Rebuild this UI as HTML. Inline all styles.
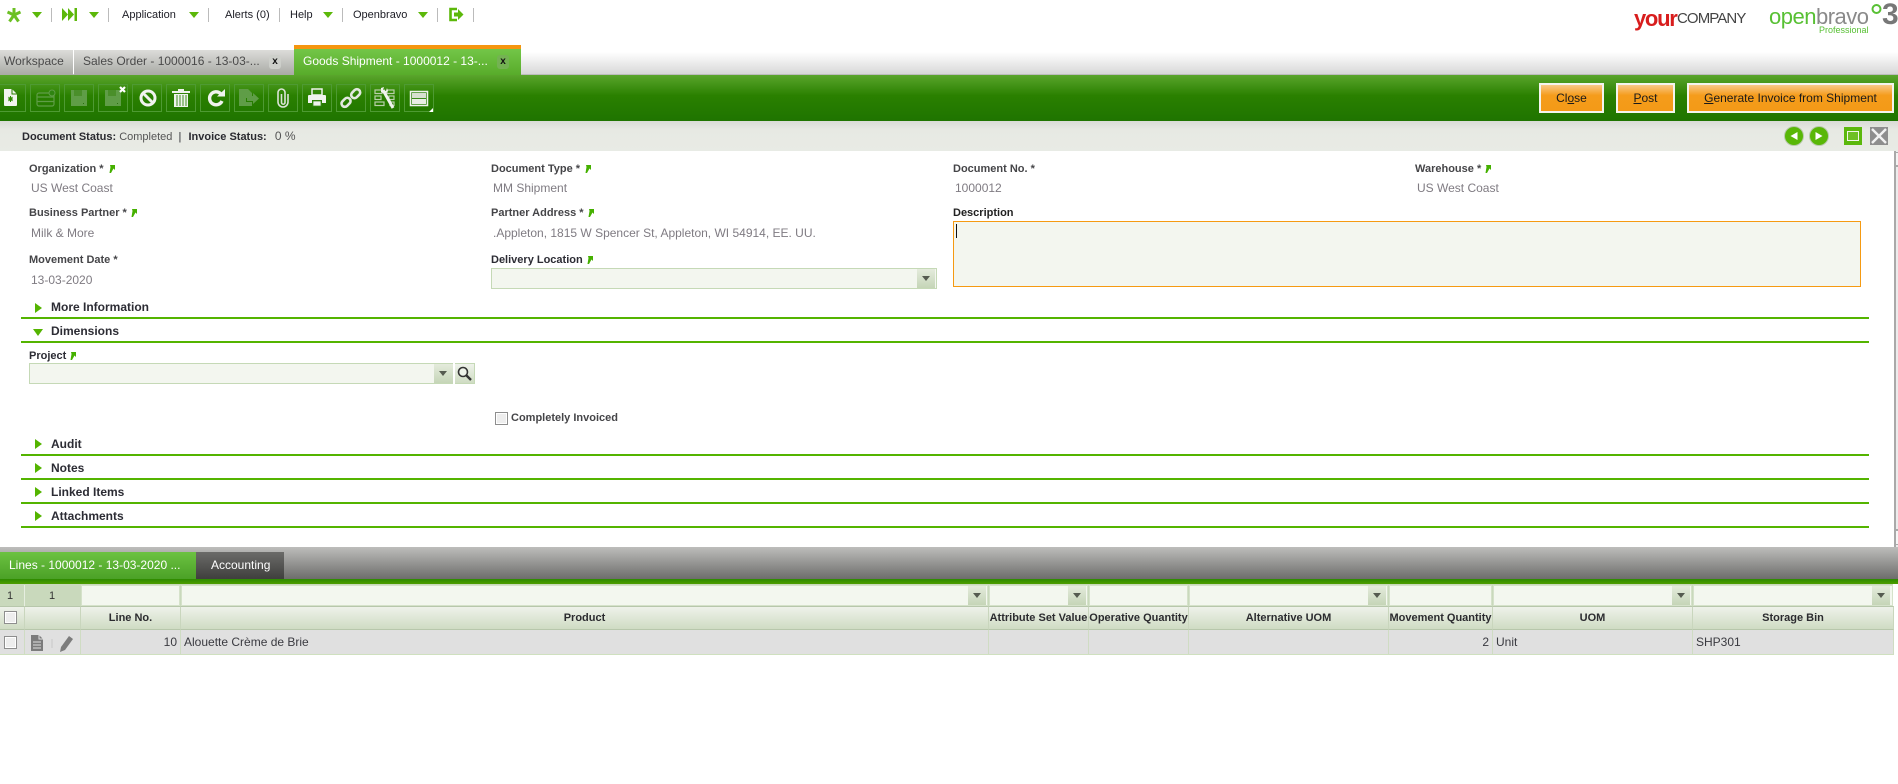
<!DOCTYPE html>
<html><head><meta charset="utf-8"><title>Goods Shipment</title>
<style>
html,body{margin:0;padding:0;background:#fff;width:1898px;height:784px;overflow:hidden;font-family:"Liberation Sans",sans-serif}
div,span,svg{position:absolute;box-sizing:border-box;white-space:nowrap}
.m{font-size:11px;color:#1c1c24;top:9px;line-height:13px}
.sep{width:1px;height:14px;top:8px;background:#bbb}
.dd{width:0;height:0;border-left:5px solid transparent;border-right:5px solid transparent;border-top:6px solid #5cb80a;top:12px}
.tab{top:50px;height:25px;line-height:23px;font-size:12px;background:linear-gradient(#dcdcd9,#a9aaa5);color:#4a4a4a;padding-left:4px}
.x{width:12px;height:14px;top:55px;background:#8fb07f;border-radius:3px;color:#111;font-size:10px;line-height:13px;text-align:center;font-weight:bold}
.b{top:84px;width:30px;height:28px;border:1px solid #4e9a33}
.tb{top:83px;height:30px;border:2px solid #f4f4ee;background:linear-gradient(#f9c987 0,#f59c1b 40%,#f49a17 100%);color:#1a1a1a;font-size:12px;line-height:26px;text-align:center}
.tb u{text-decoration:underline}
.l{font-size:11px;font-weight:bold;color:#454548;line-height:13px}
.v{font-size:12px;color:#7f7b82;line-height:14px}
.s{font-size:12px;font-weight:bold;color:#2c2c34;left:51px;line-height:14px}
.ln{left:21px;width:1848px;height:2px;background:#54b400}
.cmb{background:#f3f6ef;border:1px solid #c5d9b6}
.arr{width:8px;height:9px}
.r{width:0;height:0;border-top:5.5px solid transparent;border-bottom:5.5px solid transparent;border-left:7px solid #54b400;left:35px}
.fc{top:585px;height:21px;background:#f3f7ef;border:1px solid #d5e2ca}
.h{top:606px;height:24px;background:linear-gradient(#eef2ea,#cfdcc3);border-top:1px solid #b7c7ab;border-bottom:1px solid #b7c7ab;border-right:1px solid #c9d6bd;font-size:11px;font-weight:bold;color:#2b2b2f;text-align:center;line-height:23px;overflow:hidden}
.d{top:630px;height:25px;background:#e0e0e0;border-bottom:1px solid #cfe0bf;border-right:1px solid #cfdcc3;font-size:12px;color:#3a3a40;line-height:24px;padding:0 3px;overflow:hidden}
.fb{top:586px;width:18px;height:19px;background:linear-gradient(#e4ebdc,#c5d5b7)}
.fb:after{content:"";position:absolute;left:5px;top:7px;border-left:4.5px solid transparent;border-right:4.5px solid transparent;border-top:5px solid #555b50}
.ck{width:13px;height:13px;border:1px solid #8e8e8e;background:#eee;box-shadow:inset 0 0 0 1px #fff}
</style></head><body>

<!-- top menu -->
<svg style="left:6px;top:7px" width="16" height="16" viewBox="0 0 16 16"><g stroke="#6cc024" stroke-width="3" fill="none"><path d="M8 1v7M8 8L1.500 5M8 8l6.500-3M8 8l-4.500 6.500M8 8l4.500 6.500"/></g></svg>
<div class="dd" style="left:32px"></div><div class="sep" style="left:51px"></div>
<svg style="left:62px;top:7px" width="16" height="15" viewBox="0 0 16 15"><path d="M0 1l6 6.500L0 14zM6 1l6 6.500L6 14z" fill="#5cb80a"/><rect x="12.500" y="1" width="2.500" height="13" fill="#5cb80a"/></svg>
<div class="dd" style="left:89px"></div><div class="sep" style="left:108px"></div>
<div class="m" style="left:122px">Application</div><div class="dd" style="left:189px"></div><div class="sep" style="left:208px"></div>
<div class="m" style="left:225px">Alerts (0)</div><div class="sep" style="left:279px"></div>
<div class="m" style="left:290px">Help</div><div class="dd" style="left:323px"></div><div class="sep" style="left:342px"></div>
<div class="m" style="left:353px">Openbravo</div><div class="dd" style="left:418px"></div><div class="sep" style="left:437px"></div>
<svg style="left:449px;top:7px" width="15" height="15" viewBox="0 0 15 15"><path d="M8 2H1.500v11H8" fill="none" stroke="#5cb80a" stroke-width="2.600"/><path d="M5 5.500h4V2l5.500 5.500L9 13V9.500H5z" fill="#5cb80a"/></svg>
<div class="sep" style="left:473px"></div>

<!-- logos -->
<div style="left:1634px;top:7px;font-size:22px;line-height:24px;font-weight:bold;color:#d81d1d;letter-spacing:-1.300px">your</div>
<div style="left:1677px;top:10px;font-size:15px;line-height:17px;color:#444;letter-spacing:-.9px">COMPANY</div>
<div style="left:1769px;top:5px;font-size:22px;line-height:24px;color:#58c034;letter-spacing:-.5px">open<span style="position:static;color:#8a8a8a">bravo</span></div>
<div style="left:1819px;top:25px;font-size:9px;line-height:11px;color:#58c034">Professional</div>
<svg style="left:1871px;top:3px" width="11" height="12" viewBox="0 0 11 12"><circle cx="5.500" cy="6" r="4" fill="none" stroke="#58c034" stroke-width="2"/></svg>
<div style="left:1882px;top:0;font-size:30px;line-height:30px;font-weight:bold;color:#777">3</div>

<!-- hatched band -->
<div style="left:521px;top:52px;width:1377px;height:23px;background:linear-gradient(#fff,#d6d6d6)"></div>
<div style="left:0;top:74px;width:1898px;height:1px;background:#bcbcbc"></div>

<!-- tabs -->
<div class="tab" style="left:0;width:73px">Workspace</div>
<div class="tab" style="left:74px;width:220px;padding-left:9px">Sales Order - 1000016 - 13-03-...</div>
<div class="x" style="left:269px;background:#cdcfca">x</div>
<div class="tab" style="left:294px;top:45px;height:30px;width:227px;padding-left:9px;border-top:4px solid #f5950f;background:linear-gradient(#73c648,#58ac2a);color:#fff;line-height:25px">Goods Shipment - 1000012 - 13-...</div>
<div class="x" style="left:497px;background:#74b253">x</div>

<!-- toolbar -->
<div style="left:0;top:75px;width:1898px;height:46px;background:linear-gradient(#5aa52c,#2a8000 45%,#1f7400)"></div>
<div class="b" style="left:-4px"></div><div class="b" style="left:30px"></div><div class="b" style="left:64px"></div><div class="b" style="left:98px"></div><div class="b" style="left:132px"></div><div class="b" style="left:166px"></div><div class="b" style="left:200px"></div><div class="b" style="left:234px"></div><div class="b" style="left:268px"></div><div class="b" style="left:302px"></div><div class="b" style="left:336px"></div><div class="b" style="left:370px"></div><div class="b" style="left:404px"></div>
<svg style="left:0;top:84px" width="440" height="30" viewBox="0 0 440 30">
<!-- new -->
<path d="M4 5h8l5 5v11a1 1 0 0 1-1 1H5a1 1 0 0 1-1-1z" fill="#f2f5ef"/><path d="M12 5v5h5" fill="none" stroke="#2a8000"/><path d="M10.500 12v6M8 15h5M8.500 13l4 4M12.500 13l-4 4" stroke="#2f8a00" stroke-width="1"/>
<!-- form (disabled) -->
<g fill="none" stroke="#5f9d47" stroke-width="1.200"><rect x="37" y="9" width="17" height="13" rx="2"/><path d="M37 13h17M37 17.500h17"/></g><circle cx="52" cy="9" r="3" fill="#2f8410" stroke="#5f9d47"/>
<!-- save disabled -->
<path d="M71 6h16v16H71z" fill="#5f9d47"/><path d="M74 6h8v6h-8z" fill="#4a8f2a"/><rect x="83" y="19" width="1" height="1" fill="#2a7010"/>
<path d="M105 6h16v16h-16z" fill="#5f9d47"/><path d="M108 6h8v6h-8z" fill="#4a8f2a"/><rect x="117" y="19" width="1" height="1" fill="#2a7010"/>
<path d="M120 3l5 5M125 3l-5 5" stroke="#fff" stroke-width="2.200"/>
<!-- undo -->
<circle cx="148" cy="14" r="7" fill="none" stroke="#f0f3ee" stroke-width="3"/><path d="M143 9l10 10" stroke="#f0f3ee" stroke-width="3"/>
<!-- delete -->
<path d="M172 7h18v2h-18z" fill="#f0f3ee"/><path d="M178 5h6v2h-6z" fill="#f0f3ee"/><path d="M174 10h14v13h-14z" fill="#f0f3ee"/><path d="M177 11v11M180 11v11M183 11v11M186 11v11" stroke="#3f8c20" stroke-width="1"/>
<!-- refresh -->
<path d="M220.500 9.500a6.500 6.500 0 1 0 1.500 7.500" fill="none" stroke="#f0f3ee" stroke-width="3.400"/><path d="M217 12.500h8V5z" fill="#f0f3ee"/>
<!-- export disabled -->
<path d="M239 5h9l4 4v5h-6v4h6v4h-13z" fill="#5f9d47"/><path d="M247 12h6V9l6 5.500-6 5.500v-3h-6z" fill="#5f9d47"/>
<!-- clip -->
<path d="M281.500 10V18.500A1.750 1.750 0 0 0 285 18.500V8.500A3.500 3.500 0 0 0 278 8.500V18A5 5 0 0 0 288 18V10" fill="none" stroke="#dbe3d6" stroke-width="1.600"/>
<!-- print -->
<path d="M312 5h10v6h-10z" fill="none" stroke="#f0f3ee" stroke-width="1.500"/><path d="M309 11h16a1 1 0 0 1 1 1v7h-4v-3h-10v3h-4v-7a1 1 0 0 1 1-1z" fill="#f0f3ee"/><path d="M313 17h8v5h-8z" fill="#f0f3ee" stroke="#3f8c20" stroke-width=".8"/>
<!-- link -->
<g fill="none" stroke="#e3e9df" stroke-width="2.600"><rect x="-4.500" y="-3" width="10" height="6.500" rx="3.200" transform="translate(345.500 18.500) rotate(-45)"/><rect x="-5" y="-3" width="10" height="6.500" rx="3.200" transform="translate(355.500 9.500) rotate(-45)"/></g>
<!-- parameter -->
<g fill="none" stroke="#b8cfa9" stroke-width="1.200"><rect x="375" y="6" width="7" height="3.500"/><rect x="387" y="6" width="7" height="3.500"/><rect x="375" y="12" width="6" height="3.500"/><rect x="389" y="12" width="5" height="3.500"/><rect x="375" y="18" width="9" height="3.500"/><rect x="390" y="18" width="4" height="3.500"/></g>
<path d="M383 6l10 18" stroke="#f0f3ee" stroke-width="3"/><path d="M381 4l3-1-1 3 3 1 1-3 1 3-3 3-4-2z" fill="#f0f3ee"/>
<!-- layout -->
<rect x="410.500" y="7.500" width="17" height="14" fill="#3b8b1b" stroke="#f0f3ee" stroke-width="1.500"/><rect x="412" y="9" width="14" height="5" fill="#d6e0cf"/><rect x="412" y="15" width="14" height="5" fill="#e9eee5"/>
<path d="M433 24v4h-4z" fill="#fff"/>
</svg>

<div class="tb" style="left:1539px;width:65px">Cl<u>o</u>se</div>
<div class="tb" style="left:1616px;width:59px"><u>P</u>ost</div>
<div class="tb" style="left:1687px;width:207px"><u>G</u>enerate Invoice from Shipment</div>

<!-- status bar -->
<div style="left:0;top:121px;width:1898px;height:30px;background:linear-gradient(#d9dbd6,#e7e9e3 30%,#e8ebe5)"></div>
<div style="left:22px;top:130px;font-size:11px;line-height:13px;color:#2a2a30"><b style="position:static">Document Status:</b> <span style="position:static;color:#555">Completed</span> &nbsp;|&nbsp; <b style="position:static;margin-left:1px">Invoice Status:</b> &nbsp;<span style="position:static;color:#555;font-size:12px;margin-left:2px">0 %</span></div>
<svg style="left:1783px;top:125px" width="48" height="22" viewBox="0 0 48 22"><circle cx="11" cy="11" r="9.500" fill="#59b707" stroke="#b9c9ad"/><path d="M14.500 7v8L7.500 11z" fill="#fff"/><circle cx="36" cy="11" r="9.500" fill="#59b707" stroke="#b9c9ad"/><path d="M32.500 7v8l7-4z" fill="#fff"/></svg>
<div style="left:1844px;top:127px;width:18px;height:18px;background:#5bb80c"></div>
<div style="left:1847px;top:131px;width:12px;height:10px;border:1px solid #f1f5ea;background:#6ec025"></div>
<svg style="left:1870px;top:127px" width="18" height="18" viewBox="0 0 18 18"><rect width="18" height="18" fill="#8e8e8e"/><path d="M2 2l14 14M16 2L2 16" stroke="#f2f2f2" stroke-width="2.400"/></svg>

<!-- scrollbar -->
<div style="left:1894px;top:151px;width:4px;height:396px;background:#ececec;border-left:2px solid #a9a9a9"></div>
<div style="left:1894px;top:152px;width:4px;height:15px;background:#f3f3f3;border-left:2px solid #a9a9a9;border-top:1px solid #a9a9a9;border-bottom:2px solid #a9a9a9"></div>
<div style="left:1894px;top:529px;width:4px;height:16px;background:#f6f6f6;border-left:2px solid #a9a9a9;border-top:2px solid #a9a9a9;border-bottom:1px solid #a9a9a9"></div>

<!-- form labels -->
<div class="l" style="left:29px;top:163px">Organization *</div>
<svg class="arr" style="left:108px;top:164px" viewBox="0 0 8 9"><path d="M2 1h5v5L5.500 4.500 3 9H1.500l1-6z" fill="#45b000"/></svg>
<div class="v" style="left:31px;top:181px">US West Coast</div>
<div class="l" style="left:491px;top:163px">Document Type *</div>
<svg class="arr" style="left:584px;top:164px" viewBox="0 0 8 9"><path d="M2 1h5v5L5.500 4.500 3 9H1.500l1-6z" fill="#45b000"/></svg>
<div class="v" style="left:493px;top:181px">MM Shipment</div>
<div class="l" style="left:953px;top:163px">Document No. *</div>
<div class="v" style="left:955px;top:181px">1000012</div>
<div class="l" style="left:1415px;top:163px">Warehouse *</div>
<svg class="arr" style="left:1484px;top:164px" viewBox="0 0 8 9"><path d="M2 1h5v5L5.500 4.500 3 9H1.500l1-6z" fill="#45b000"/></svg>
<div class="v" style="left:1417px;top:181px">US West Coast</div>

<div class="l" style="left:29px;top:207px">Business Partner *</div>
<svg class="arr" style="left:130px;top:208px" viewBox="0 0 8 9"><path d="M2 1h5v5L5.500 4.500 3 9H1.500l1-6z" fill="#45b000"/></svg>
<div class="v" style="left:31px;top:226px">Milk &amp; More</div>
<div class="l" style="left:491px;top:207px">Partner Address *</div>
<svg class="arr" style="left:587px;top:208px" viewBox="0 0 8 9"><path d="M2 1h5v5L5.500 4.500 3 9H1.500l1-6z" fill="#45b000"/></svg>
<div class="v" style="left:493px;top:226px">.Appleton, 1815 W Spencer St, Appleton, WI 54914, EE. UU.</div>
<div class="l" style="left:953px;top:207px;color:#222">Description</div>
<div style="left:953px;top:221px;width:908px;height:66px;background:#f3f6ef;border:1px solid #f59a12"></div>
<div style="left:956px;top:224px;width:1px;height:14px;background:#111"></div>

<div class="l" style="left:29px;top:254px">Movement Date *</div>
<div class="v" style="left:31px;top:273px">13-03-2020</div>
<div class="l" style="left:491px;top:254px;color:#2c2c34">Delivery Location</div>
<svg class="arr" style="left:586px;top:255px" viewBox="0 0 8 9"><path d="M2 1h5v5L5.500 4.500 3 9H1.500l1-6z" fill="#45b000"/></svg>
<div class="cmb" style="left:491px;top:268px;width:446px;height:21px"></div>
<div class="fb" style="left:917px;top:269px"></div>

<!-- sections -->
<div class="r" style="top:303px"></div><div class="s" style="top:300px">More Information</div><div class="ln" style="top:317px"></div>
<div style="left:33px;top:329px;width:0;height:0;border-left:5.500px solid transparent;border-right:5.500px solid transparent;border-top:7px solid #54b400"></div><div class="s" style="top:324px">Dimensions</div><div class="ln" style="top:341px"></div>
<div class="l" style="left:29px;top:350px;color:#2c2c34">Project</div>
<svg class="arr" style="left:69px;top:351px" viewBox="0 0 8 9"><path d="M2 1h5v5L5.500 4.500 3 9H1.500l1-6z" fill="#45b000"/></svg>
<div class="cmb" style="left:29px;top:363px;width:446px;height:21px"></div>
<div class="fb" style="left:434px;top:364px;width:19px"></div>
<div style="left:453px;top:363px;width:2px;height:21px;background:#fff"></div>
<div style="left:455px;top:364px;width:19px;height:19px;background:linear-gradient(#eef2ea,#cfdcc3)"></div>
<svg style="left:457px;top:366px" width="15" height="15" viewBox="0 0 15 15"><circle cx="6" cy="6" r="4.500" fill="#eef3ea" stroke="#333" stroke-width="1.600"/><path d="M9.500 9.500l4.500 4.500" stroke="#333" stroke-width="2.400"/></svg>
<div class="ck" style="left:495px;top:412px"></div>
<div class="l" style="left:511px;top:412px">Completely Invoiced</div>

<div class="r" style="top:439px"></div><div class="s" style="top:437px">Audit</div><div class="ln" style="top:454px"></div>
<div class="r" style="top:463px"></div><div class="s" style="top:461px">Notes</div><div class="ln" style="top:478px"></div>
<div class="r" style="top:487px"></div><div class="s" style="top:485px">Linked Items</div><div class="ln" style="top:502px"></div>
<div class="r" style="top:511px"></div><div class="s" style="top:509px">Attachments</div><div class="ln" style="top:526px"></div>

<!-- lower tabs -->
<div style="left:0;top:547px;width:1898px;height:32px;background:linear-gradient(#bdbdbb,#6d6d6b)"></div>
<div style="left:0;top:552px;width:196px;height:27px;background:linear-gradient(#6cc242,#4ba127);color:#fff;font-size:12px;line-height:26px;padding-left:9px">Lines - 1000012 - 13-03-2020 ...</div>
<div style="left:196px;top:552px;width:88px;height:27px;background:linear-gradient(#6b6b69,#3f3f3d);color:#fff;font-size:12px;line-height:26px;padding-left:15px">Accounting</div>
<div style="left:0;top:579px;width:1898px;height:5px;background:linear-gradient(#2d8a00,#4d9e00)"></div>

<!-- grid filter -->
<div style="left:0;top:584px;width:80px;height:22px;background:#c9d9bc"></div>
<div style="left:24px;top:585px;width:1px;height:21px;background:#e6eee0"></div>
<div style="left:7px;top:590px;font-size:11px;line-height:13px;color:#333">1</div>
<div style="left:49px;top:590px;font-size:11px;line-height:13px;color:#333">1</div>
<div style="left:80px;top:584px;width:1813px;height:22px;background:#c9d9bc"></div>
<div class="fc" style="left:81px;width:99px"></div>
<div class="fc" style="left:181px;width:807px"></div><div class="fb" style="left:968px"></div>
<div class="fc" style="left:989px;width:99px"></div><div class="fb" style="left:1068px"></div>
<div class="fc" style="left:1089px;width:99px"></div>
<div class="fc" style="left:1189px;width:199px"></div><div class="fb" style="left:1368px"></div>
<div class="fc" style="left:1389px;width:103px"></div>
<div class="fc" style="left:1493px;width:199px"></div><div class="fb" style="left:1672px"></div>
<div class="fc" style="left:1693px;width:200px"></div><div class="fb" style="left:1872px"></div>

<!-- grid header -->
<div class="h" style="left:0;width:25px"></div><div class="ck" style="left:4px;top:611px"></div>
<div class="h" style="left:25px;width:56px"></div>
<div class="h" style="left:81px;width:100px">Line No.</div>
<div class="h" style="left:181px;width:808px">Product</div>
<div class="h" style="left:989px;width:100px">Attribute Set Value</div>
<div class="h" style="left:1089px;width:100px">Operative Quantity</div>
<div class="h" style="left:1189px;width:200px">Alternative UOM</div>
<div class="h" style="left:1389px;width:104px">Movement Quantity</div>
<div class="h" style="left:1493px;width:200px">UOM</div>
<div class="h" style="left:1693px;width:201px">Storage Bin</div>

<!-- data row -->
<div class="d" style="left:0;width:25px"></div><div class="ck" style="left:4px;top:636px"></div>
<div class="d" style="left:25px;width:56px"></div>
<svg style="left:30px;top:634px" width="46" height="18" viewBox="0 0 46 18"><path d="M1 1h8l4 4v12H1z" fill="#7c7c7c"/><path d="M3 8h8M3 11h8M3 14h8" stroke="#e0e0e0"/><path d="M9 1v4h4" fill="none" stroke="#e0e0e0"/><path d="M22 5v9" stroke="#c9c9c9"/><path d="M31 13l8-11 4 3-8 11-5 2z" fill="#7c7c7c"/></svg>
<div class="d" style="left:81px;width:100px;text-align:right">10</div>
<div class="d" style="left:181px;width:808px">Alouette Crème de Brie</div>
<div class="d" style="left:989px;width:100px"></div>
<div class="d" style="left:1089px;width:100px"></div>
<div class="d" style="left:1189px;width:200px"></div>
<div class="d" style="left:1389px;width:104px;text-align:right">2</div>
<div class="d" style="left:1493px;width:200px">Unit</div>
<div class="d" style="left:1693px;width:201px">SHP301</div>
</body></html>
